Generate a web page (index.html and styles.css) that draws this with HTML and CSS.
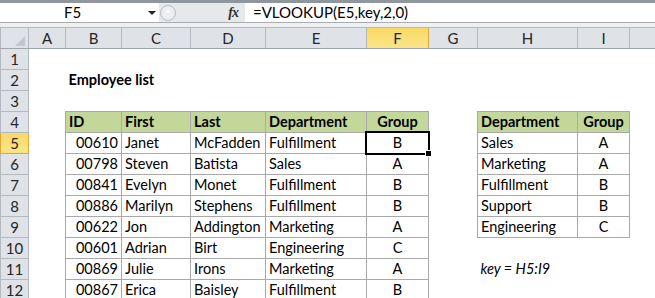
FILE: index.html
```html
<!DOCTYPE html>
<html lang="en">
<head>
<meta charset="UTF-8">
<title>Employee list - VLOOKUP</title>
<link rel="stylesheet" href="styles.css">
</head>
<body>
<div class="topbar">
  <div class="name-box">F5</div>
  <div class="drop"><span class="tri"></span></div>
  <div class="fx-zone"><span class="knob"></span><span class="fx">fx</span></div>
  <div class="formula">=VLOOKUP(E5,key,2,0)</div>
</div>
<div class="strip"></div>

<table class="sheet">
  <colgroup>
    <col style="width:28px"><col style="width:37px"><col style="width:56px"><col style="width:69px">
    <col style="width:75px"><col style="width:101px"><col style="width:62px"><col style="width:49px">
    <col style="width:100px"><col style="width:52px"><col style="width:40px">
  </colgroup>
  <tr class="heads">
    <th class="corner"><svg width="12" height="12" viewBox="0 0 12 12"><path d="M11 1 L11 11 L1 11 Z" fill="#c3c7cd"/></svg></th>
    <th>A</th><th>B</th><th>C</th><th>D</th><th>E</th><th class="on">F</th><th>G</th><th>H</th><th>I</th><th></th>
  </tr>
  <tr><th>1</th><td></td><td></td><td></td><td></td><td></td><td></td><td></td><td></td><td></td><td></td></tr>
  <tr><th>2</th><td></td><td class="title">Employee list</td><td></td><td></td><td></td><td></td><td></td><td></td><td></td><td></td></tr>
  <tr><th>3</th><td></td><td></td><td></td><td></td><td></td><td></td><td></td><td></td><td></td><td></td></tr>
  <tr><th>4</th><td></td><td class="d hd">ID</td><td class="d hd">First</td><td class="d hd">Last</td><td class="d hd">Department</td><td class="d hd c">Group</td><td></td><td class="d hd">Department</td><td class="d hd c">Group</td><td></td></tr>
  <tr><th class="on">5</th><td></td><td class="d r">00610</td><td class="d">Janet</td><td class="d">McFadden</td><td class="d">Fulfillment</td><td class="d c sel">B</td><td></td><td class="d">Sales</td><td class="d c">A</td><td></td></tr>
  <tr><th>6</th><td></td><td class="d r">00798</td><td class="d">Steven</td><td class="d">Batista</td><td class="d">Sales</td><td class="d c">A</td><td></td><td class="d">Marketing</td><td class="d c">A</td><td></td></tr>
  <tr><th>7</th><td></td><td class="d r">00841</td><td class="d">Evelyn</td><td class="d">Monet</td><td class="d">Fulfillment</td><td class="d c">B</td><td></td><td class="d">Fulfillment</td><td class="d c">B</td><td></td></tr>
  <tr><th>8</th><td></td><td class="d r">00886</td><td class="d">Marilyn</td><td class="d">Stephens</td><td class="d">Fulfillment</td><td class="d c">B</td><td></td><td class="d">Support</td><td class="d c">B</td><td></td></tr>
  <tr><th>9</th><td></td><td class="d r">00622</td><td class="d">Jon</td><td class="d">Addington</td><td class="d">Marketing</td><td class="d c">A</td><td></td><td class="d">Engineering</td><td class="d c">C</td><td></td></tr>
  <tr><th>10</th><td></td><td class="d r">00601</td><td class="d">Adrian</td><td class="d">Birt</td><td class="d">Engineering</td><td class="d c">C</td><td></td><td></td><td></td><td></td></tr>
  <tr><th>11</th><td></td><td class="d r">00869</td><td class="d">Julie</td><td class="d">Irons</td><td class="d">Marketing</td><td class="d c">A</td><td></td><td class="note">key = H5:I9</td><td></td><td></td></tr>
  <tr><th>12</th><td></td><td class="d r">00867</td><td class="d">Erica</td><td class="d">Baisley</td><td class="d">Fulfillment</td><td class="d c">B</td><td></td><td></td><td></td><td></td></tr>
</table>
</body>
</html>
```

FILE: styles.css
```css
* { box-sizing: border-box; }
body { margin: 0; background: #fff; font-family: Lato, "Liberation Sans", sans-serif; color: #000; overflow: hidden; }

/* formula bar */
.topbar { display: flex; height: 22px; border-top: 3px solid #8f969d; background: #fff; }
.name-box { width: 145px; text-align: center; font-size: 15px; line-height: 19px; }
.drop { width: 14px; display: flex; align-items: center; justify-content: center; }
.tri { width: 0; height: 0; border-left: 4px solid transparent; border-right: 4px solid transparent; border-top: 4px solid #222; }
.fx-zone { width: 86px; background: #e6e9ec; position: relative; display: flex; align-items: center; justify-content: flex-end; padding-right: 7px; }
.knob { position: absolute; left: 1px; top: 2px; width: 16px; height: 16px; border-radius: 50%; border: 1px solid #b7bcc2; background: #eceef1; }
.knob::after { content: ""; position: absolute; left: 5px; top: 4px; width: 4px; height: 3px; border-radius: 2px 2px 0 0; background: #fff; }
.fx { font-family: "Liberation Serif", serif; font-style: italic; font-weight: bold; font-size: 14px; color: #333; letter-spacing: -1px; }
.formula { flex: 1; padding-left: 8px; font-size: 15px; line-height: 19px; white-space: nowrap; }
.strip { height: 6px; border-top: 1px solid #a9adb3; border-bottom: 1px solid #b3b8be; background: #eef0f2; }

/* grid */
.sheet { border-collapse: collapse; table-layout: fixed; width: 669px; font-size: 14.5px; }
.sheet tr { height: 21px; }
.sheet tr.heads { height: 20px; }
.sheet th { background: #dfe3e8; border: 1px solid #b4b9c0; font-weight: normal; font-size: 15px; color: #262626; text-align: center; padding: 0; line-height: 18px; vertical-align: middle; }
.sheet tr.heads th { border-top: none; border-bottom-color: #9ea4ab; }
.sheet th.corner { text-align: right; vertical-align: bottom; padding: 0 2px 1px 0; line-height: 0; }
.sheet th.on { background: linear-gradient(#f9d866, #fbe588); border-color: #e2a73b; }
.sheet td { padding: 0 3px 1px; vertical-align: bottom; line-height: 18px; white-space: nowrap; overflow: visible; }
.sheet td.d { border: 1px solid #a9a9a9; }
.sheet td.hd { background: #c4d79b; font-weight: bold; }
.sheet td.r { text-align: right; }
.sheet td.c { text-align: center; }
.sheet td.title { font-weight: bold; }
.sheet td.note { font-style: italic; }
.sheet td.sel { position: relative; }
.sheet td.sel::before { content: ""; position: absolute; left: -2px; top: -2px; right: -2px; bottom: -2px; border: 2px solid #000; }
.sheet td.sel::after { content: ""; position: absolute; right: -4px; bottom: -4px; width: 5px; height: 5px; background: #000; border: 1px solid #fff; box-sizing: content-box; }
```
